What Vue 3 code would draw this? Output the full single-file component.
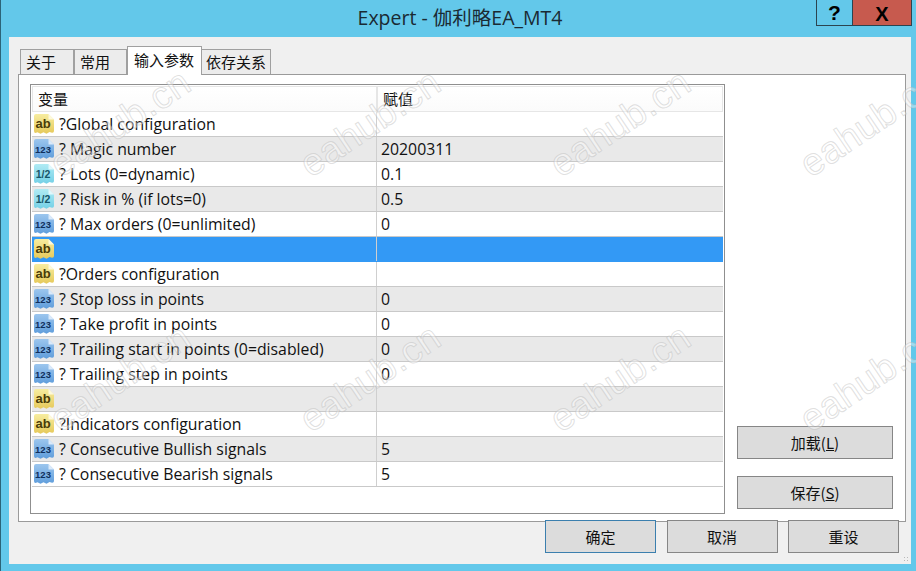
<script setup>
const tabs = [
  { label: '关于', cls: 'tab-a' },
  { label: '常用', cls: 'tab-b' },
  { label: '输入参数', cls: 'tab-c active' },
  { label: '依存关系', cls: 'tab-d' },
]
const rows = [
  { t: 'ab', n: '?Global configuration', v: '' },
  { t: '123', n: '? Magic number', v: '20200311' },
  { t: 'half', n: '? Lots (0=dynamic)', v: '0.1' },
  { t: 'half', n: '? Risk in % (if lots=0)', v: '0.5' },
  { t: '123', n: '? Max orders (0=unlimited)', v: '0' },
  { t: 'ab', n: '', v: '', sel: true },
  { t: 'ab', n: '?Orders configuration', v: '' },
  { t: '123', n: '? Stop loss in points', v: '0' },
  { t: '123', n: '? Take profit in points', v: '0' },
  { t: '123', n: '? Trailing start in points (0=disabled)', v: '0' },
  { t: '123', n: '? Trailing step in points', v: '0' },
  { t: 'ab', n: '', v: '' },
  { t: 'ab', n: '?Indicators configuration', v: '' },
  { t: '123', n: '? Consecutive Bullish signals', v: '5' },
  { t: '123', n: '? Consecutive Bearish signals', v: '5' },
]
const iconLabel = { ab: 'ab', '123': '123', half: '1/2' }
const marks = [
  { x: 38, y: 98 }, { x: 288, y: 98 }, { x: 538, y: 98 }, { x: 788, y: 98 },
  { x: 38, y: 353 }, { x: 288, y: 353 }, { x: 538, y: 353 }, { x: 788, y: 353 },
]
</script>

<template>
  <div class="window">
    <svg class="defs" width="0" height="0">
      <defs>
        <linearGradient id="g-ab" x1="0" y1="0" x2="0" y2="1">
          <stop offset="0" stop-color="#f7eda0" />
          <stop offset="1" stop-color="#e6c95a" />
        </linearGradient>
        <linearGradient id="g-123" x1="0" y1="0" x2="0" y2="1">
          <stop offset="0" stop-color="#9cc6ee" />
          <stop offset="1" stop-color="#5f9ddb" />
        </linearGradient>
        <linearGradient id="g-half" x1="0" y1="0" x2="0" y2="1">
          <stop offset="0" stop-color="#b0ebf4" />
          <stop offset="1" stop-color="#74d0e6" />
        </linearGradient>
      </defs>
    </svg>
    <header class="titlebar">
      <div class="title">Expert - 伽利略EA_MT4</div>
      <div class="caption">
        <div class="cap help">?</div>
        <div class="cap close">X</div>
      </div>
    </header>
    <main class="client">
      <nav class="tabs">
        <div v-for="tab in tabs" :key="tab.label" class="tab" :class="tab.cls">{{ tab.label }}</div>
      </nav>
      <section class="panel">
        <div class="list">
          <div class="head">
            <div class="hcell hname">变量</div>
            <div class="hcell hval">赋值</div>
          </div>
          <div
            v-for="(r, i) in rows"
            :key="i"
            class="row"
            :class="{ alt: i % 2 === 1, sel: r.sel }"
          >
            <div class="cname">
              <svg class="icon" :class="'i-' + r.t" viewBox="0 0 22 22">
                <path class="sheet" d="M1 3 Q1 1 3 1 H15.5 L21 6.5 V18 Q21 20 19 19.8 L16.5 19 L13.5 20.8 L10.5 19.2 L7.5 20.8 L4.5 19.2 L2.5 20 Q1 20 1 18 Z" />
                <path class="fold" d="M15.5 1 V6.5 H21 Z" />
                <text class="glyph" x="10" y="15" text-anchor="middle">{{ iconLabel[r.t] }}</text>
              </svg>
              <span class="ntext">{{ r.n }}</span>
            </div>
            <div class="cval">{{ r.v }}</div>
          </div>
        </div>
        <aside class="side">
          <button class="btn side-btn">加载(<u>L</u>)</button>
          <button class="btn side-btn">保存(<u>S</u>)</button>
        </aside>
      </section>
      <footer class="actions">
        <button class="btn act default">确定</button>
        <button class="btn act">取消</button>
        <button class="btn act">重设</button>
      </footer>
      <div class="grip"></div>
    </main>
    <div
      v-for="(m, i) in marks"
      :key="'m' + i"
      class="mark"
      :style="{ left: m.x + 'px', top: m.y + 'px' }"
    >eahub.cn</div>
  </div>
</template>

<style>
html, body { margin: 0; padding: 0; background: #63c8ea; }
</style>

<style scoped>
.window {
  position: relative;
  width: 916px;
  height: 571px;
  box-sizing: border-box;
  overflow: hidden;
  background: #63c8ea;
  border-left: 1px solid #2c6478;
  padding: 0 5px 7px 8px;
  display: flex;
  flex-direction: column;
  font-family: "Open Sans", "Noto Sans CJK SC", sans-serif;
  color: #111;
}
.defs { position: absolute; }
.titlebar {
  position: relative;
  height: 37px;
  flex: none;
}
.title {
  text-align: center;
  font-size: 19.5px;
  line-height: 36px;
  padding-right: 0;
  color: #1a2a33;
}
.caption {
  position: absolute;
  top: 0;
  right: -1px;
  display: flex;
  height: 26px;
  border: 1px solid #2b4450;
  border-top: 0;
  box-sizing: border-box;
}
.cap {
  display: flex;
  align-items: center;
  justify-content: center;
  font-family: "Liberation Sans", sans-serif;
  font-weight: 700;
  color: #000;
}
.help { width: 35px; font-size: 21px; border-right: 1px solid #2b4450; }
.close { width: 58px; background: #c75a4e; font-size: 20px; padding-top: 3px; box-sizing: border-box; }

.client {
  position: relative;
  flex: 1;
  background: #f0f0f0;
  padding: 12px 5px 0 9px;
  display: flex;
  flex-direction: column;
  min-height: 0;
}
.tabs {
  display: flex;
  align-items: flex-end;
  height: 25px;
  padding-left: 2px;
  position: relative;
  z-index: 2;
}
.tab {
  box-sizing: border-box;
  height: 25px;
  border: 1px solid #a0a0a0;
  border-bottom: 0;
  background: #ececec;
  font-size: 15px;
  line-height: 24px;
  padding-left: 5px;
  white-space: nowrap;
  font-family: "Noto Sans CJK SC", sans-serif;
}
.tab-a { width: 54px; }
.tab-b { width: 53px; }
.tab-c { width: 75px; }
.tab-d { width: 70px; margin-left: -1px; padding-left: 4px; }
.tab.active {
  height: 29px;
  background: #fff;
  margin-bottom: -1px;
  padding-left: 6px;
  line-height: 25px;
  position: relative;
  z-index: 2;
}
.panel {
  box-sizing: border-box;
  height: 448px;
  flex: none;
  border: 1px solid #9a9a9a;
  background: #fff;
  padding: 9px 11px 7px 11px;
  display: flex;
  gap: 12px;
}
.list {
  box-sizing: border-box;
  width: 695px;
  height: 430px;
  flex: none;
  border: 1px solid #8f8f8f;
  padding: 1px;
  background: #fff;
}
.head {
  display: flex;
  height: 26px;
  box-sizing: border-box;
  font-size: 15px;
  font-family: "Noto Sans CJK SC", sans-serif;
}
.hcell {
  box-sizing: border-box;
  border: 1px solid #e6e6e6;
  background: linear-gradient(#fff, #fbfbfb);
  line-height: 23px;
  padding-left: 5px;
}
.hname { width: 345px; }
.hval { width: 346px; }
.row {
  display: flex;
  height: 25px;
  box-sizing: border-box;
  border-bottom: 1px solid #c9c9c9;
  font-size: 15.8px;
  background: #fff;
}
.row.alt { background: #e9e9e9; }
.row.sel { background: #3399f5; border-bottom-color: #3399f5; }
.cname {
  width: 345px;
  box-sizing: border-box;
  border-right: 1px solid #cfcfcf;
  display: flex;
  align-items: center;
  padding-left: 1px;
  flex: none;
}
.cval {
  line-height: 24px;
  padding-left: 4px;
}
.ntext { margin-left: 4px; line-height: 24px; white-space: nowrap; }
.icon { width: 22px; height: 22px; flex: none; }
.glyph { font-family: "Liberation Sans", sans-serif; font-weight: 700; }
.i-ab .sheet { fill: url(#g-ab); }
.i-ab .fold { fill: #fdf9dc; }
.i-ab .glyph { fill: #4a3c08; font-size: 13px; }
.i-123 .sheet { fill: url(#g-123); }
.i-123 .fold { fill: #dbeafa; }
.i-123 .glyph { fill: #0f2f5c; font-size: 9.5px; }
.i-half .sheet { fill: url(#g-half); }
.i-half .fold { fill: #e2f8fc; }
.i-half .glyph { fill: #17566a; font-size: 10.5px; }

.side {
  width: 156px;
  flex: none;
  display: flex;
  flex-direction: column;
  justify-content: flex-end;
  gap: 17px;
  padding-bottom: 5px;
}
.btn {
  box-sizing: border-box;
  height: 33px;
  padding: 0;
  border: 1px solid #868686;
  background: #dcdcdc;
  font-family: "Noto Sans CJK SC", sans-serif;
  font-size: 15px;
  color: #111;
}
.side-btn { width: 156px; }
.actions {
  display: flex;
  justify-content: flex-end;
  gap: 10.5px;
  margin-top: -2px;
  padding-right: 7px;
  position: relative;
}
.act { width: 111px; }
.act.default { border-color: #3b7fae; }
.grip {
  position: absolute;
  right: 2px;
  bottom: 2px;
  width: 6px;
  height: 6px;
  background-image: radial-gradient(#b8b8b8 1px, transparent 1px);
  background-size: 3px 3px;
}
.mark {
  position: absolute;
  width: 170px;
  height: 44px;
  font-family: "Liberation Sans", sans-serif;
  font-size: 38px;
  line-height: 44px;
  letter-spacing: 0.5px;
  color: rgba(255, 255, 255, 0.4);
  -webkit-text-stroke: 1px rgba(180, 180, 180, 0.42);
  transform: rotate(-34deg);
  transform-origin: center;
  white-space: nowrap;
  pointer-events: none;
  z-index: 5;
}
</style>
